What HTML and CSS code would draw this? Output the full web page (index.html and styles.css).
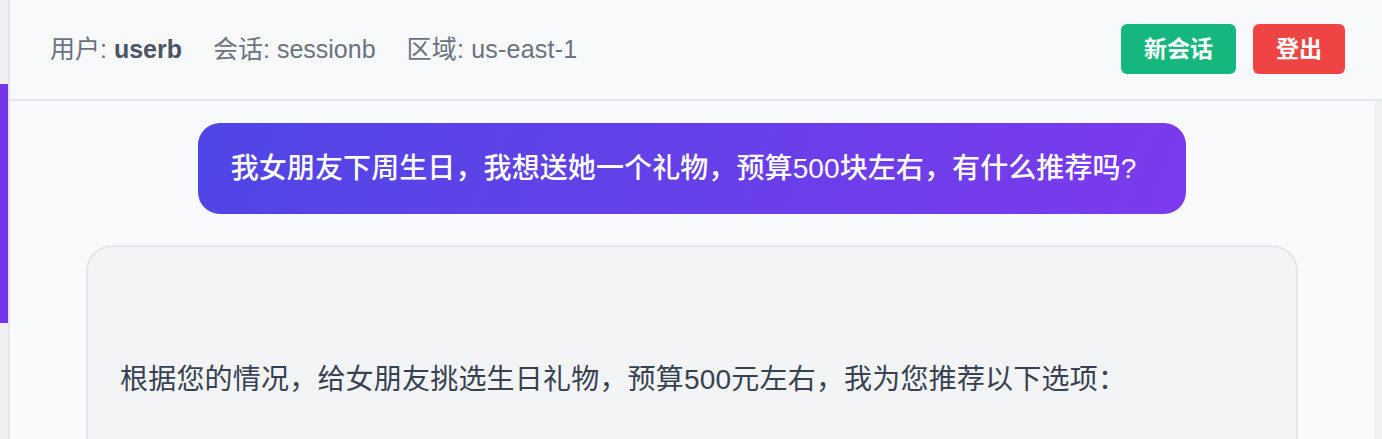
FILE: index.html
```html
<!DOCTYPE html>
<html lang="zh-CN">
<head>
<meta charset="utf-8">
<title>Chat</title>
<link rel="stylesheet" href="styles.css">
</head>
<body>
<div class="app">
  <aside class="rail">
    <div class="rail-bar"></div>
  </aside>
  <main class="main">
    <header class="topbar">
      <div class="meta">
        <span class="meta-item">用户: <b class="strong">userb</b></span>
        <span class="meta-item">会话: sessionb</span>
        <span class="meta-item">区域: us-east-1</span>
      </div>
      <div class="actions">
        <button class="btn btn-green">新会话</button>
        <button class="btn btn-red">登出</button>
      </div>
    </header>
    <div class="chat-wrap">
      <section class="chat">
        <div class="bubble-user">我女朋友下周生日，我想送她一个礼物，预算500块左右，有什么推荐吗?</div>
        <div class="answer">
          <p class="answer-text">根据您的情况，给女朋友挑选生日礼物，预算500元左右，我为您推荐以下选项：</p>
        </div>
      </section>
      <div class="scrollbar"></div>
    </div>
  </main>
</div>
</body>
</html>
```

FILE: styles.css
```css
* { box-sizing: border-box; }
html, body {
  margin: 0;
  padding: 0;
  height: 439px;
  overflow: hidden;
  background: #f9fafb;
  font-family: "Liberation Sans", "Noto Sans CJK SC", sans-serif;
}
.app {
  display: flex;
  height: 439px;
  overflow: hidden;
}
.rail {
  width: 10px;
  flex: none;
  background: #efeff1;
  border-right: 2px solid #e6e7eb;
  padding-top: 84px;
}
.rail-bar {
  height: 239px;
  background: #7434ea;
}
.main {
  flex: 1;
  display: flex;
  flex-direction: column;
  min-width: 0;
  overflow: hidden;
}
.topbar {
  height: 101px;
  flex: none;
  display: flex;
  align-items: center;
  justify-content: space-between;
  padding: 0 37px 2px 40px;
  background: #f8f9fa;
  border-bottom: 2px solid #e5e7eb;
}
.meta {
  display: flex;
  gap: 31px;
  font-size: 25px;
  color: #6b7280;
  line-height: 30px;
}
.meta-item:last-child {
  letter-spacing: 0.2px;
}
.strong {
  font-weight: 700;
  color: #4b5563;
}
.actions {
  display: flex;
  gap: 17px;
}
.btn {
  height: 50px;
  padding: 0 23px;
  border: none;
  border-radius: 6px;
  color: #fff;
  font-family: "Liberation Sans", "Noto Sans CJK SC", sans-serif;
  font-size: 23px;
  font-weight: 700;
  line-height: 50px;
}
.btn-green { background: #16b77f; }
.btn-red { background: #ef4444; }
.chat-wrap {
  flex: 1;
  display: flex;
  min-height: 0;
  overflow: hidden;
}
.chat {
  flex: 1;
  display: flex;
  flex-direction: column;
  align-items: center;
  padding: 22px 76px 0;
  gap: 31px;
  overflow: hidden;
}
.scrollbar {
  width: 8px;
  flex: none;
  background: #f1f1f1;
}
.bubble-user {
  width: fit-content;
  flex: none;
  padding: 24.5px 50px 24.5px 33px;
  border-radius: 22px;
  background: linear-gradient(110deg, #4f46e5 0%, #7c3aed 100%);
  color: #fff;
  font-size: 28px;
  font-weight: 500;
  line-height: 42px;
  letter-spacing: 0.1px;
}
.answer {
  align-self: stretch;
  flex: none;
  height: 260px;
  background: #f3f4f6;
  border: 2px solid #e5e7eb;
  border-bottom: none;
  border-radius: 26px 26px 0 0;
  padding: 112px 32px 0;
}
.answer-text {
  margin: 0;
  font-size: 28px;
  line-height: 42px;
  color: #374151;
  letter-spacing: 0.2px;
}
```
